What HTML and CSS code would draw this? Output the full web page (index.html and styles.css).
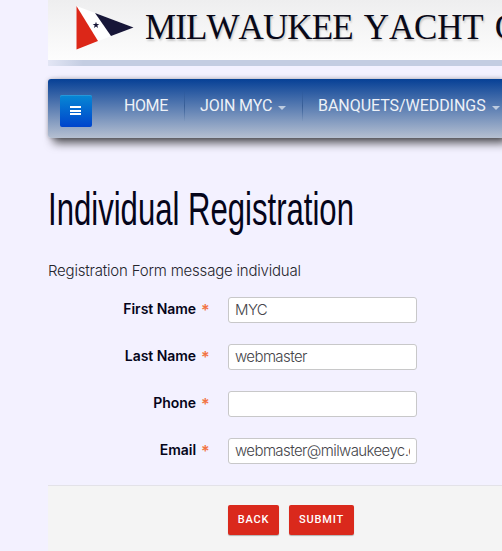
FILE: index.html
```html
<!DOCTYPE html>
<html lang="en">
<head>
<meta charset="utf-8">
<title>Individual Registration</title>
<link rel="stylesheet" href="styles.css">
</head>
<body>
<div class="page">
  <header class="brand">
    <svg class="burgee" width="58" height="46" viewBox="0 0 58 46" aria-hidden="true">
      <path d="M.5 1L57.5 22.5L.5 44.5Z" fill="#fff"/>
      <path d="M.5 1L22 36L.5 44.5Z" fill="#dc2718"/>
      <path d="M19 8L57.5 22.5L35 31Z" fill="#171638"/>
      <path d="M20 16.8l.8 2.2h2.5l-2 1.5.8 2.4-2.1-1.4-2.1 1.4.8-2.4-2-1.5h2.5z" fill="#171638"/>
    </svg>
    <span class="brand-name"><span class="city">MILWAUKEE</span> YACHT C</span>
  </header>
  <nav class="nav">
    <button class="menu-button" aria-label="Menu"><i></i><i></i><i></i></button>
    <a class="item home"><span>HOME</span></a>
    <a class="item join"><span>JOIN MYC</span><b class="caret"></b></a>
    <a class="item banquets"><span>BANQUETS/WEDDINGS</span><b class="caret"></b></a>
  </nav>
  <main>
    <h1><span>Individual Registration</span></h1>
    <p class="intro">Registration Form message individual</p>
    <form>
      <div class="row"><label for="first"><span>First Name</span><em>*</em></label><input id="first" value="MYC"></div>
      <div class="row"><label for="last"><span>Last Name</span><em>*</em></label><input id="last" value="webmaster"></div>
      <div class="row"><label for="phone"><span>Phone</span><em>*</em></label><input id="phone"></div>
      <div class="row"><label for="email"><span>Email</span><em>*</em></label><input id="email" value="webmaster@milwaukeeyc.com"></div>
      <div class="actions"><button type="button" class="back">BACK</button><button type="button" class="submit">SUBMIT</button></div>
    </form>
  </main>
</div>
</body>
</html>
```
FILE: styles.css
```css
* { box-sizing: border-box; }
body { margin: 0; background: #f3f1ff; color: #05051a; font: 300 15px/20px Inter, sans-serif; overflow: hidden; }
.page { margin-left: 48px; height: 551px; }
.brand { height: 66px; display: flex; align-items: flex-start; padding: 5px 0 0 28px; background: linear-gradient(#eeeeef, #fdfdfd 60px, transparent 60px), linear-gradient(90deg, #e3e6f5, #c4cde2 35px); overflow: hidden; }
.burgee { flex: none; }
.brand-name { flex: none; margin: 3px 0 0 11px; font: 35px/40px "Liberation Serif", serif; font-kerning: none; white-space: nowrap; color: #080818; text-shadow: 1px 2px 2px #0003; letter-spacing: -.15px; word-spacing: 2.5px; }
.city { letter-spacing: -.9px; }
.nav { height: 59px; margin-top: 13px; display: flex; border-radius: 3px 0 0 3px; background: linear-gradient(#064096, #b6c0d1); box-shadow: 5px 5px 10px #000a, 0 0 4px #0003; padding-left: 12px; }
.menu-button { flex: none; width: 32px; height: 32px; margin-top: 16px; border: 0; border-radius: 2px; background: linear-gradient(#0788d4, #0044cc); padding: 11px 10px; display: flex; flex-direction: column; gap: 1.5px; box-shadow: inset 0 1px #2498db; }
.menu-button i { width: 11px; height: 2px; flex: none; background: #fff; }
.item { height: 30px; margin-top: 12px; display: flex; align-items: center; font: 400 16px/30px Roboto, sans-serif; color: #edf1f7; white-space: nowrap; flex: none; }
.home { margin-left: 32px; width: 60px; letter-spacing: -.4px; }
.join, .banquets { border-left: 1px solid; border-image: linear-gradient(transparent, #234b8599, transparent) 1; padding-left: 15px; letter-spacing: -.05px; }
.join { width: 118px; letter-spacing: -.1px; }
.caret { margin: 3px 0 0 6px; border: 4px solid transparent; border-top-color: #bdcce0; border-bottom: 0; }
h1 { margin: 42px 0 0; height: 60px; font: 400 46px/60px "Liberation Sans", sans-serif; white-space: nowrap; }
h1 span { display: inline-block; width: 454px; transform: translateY(-1px) scaleX(.676); transform-origin: left; }
.intro { margin: 21px 0 16px; color: #25252d; letter-spacing: -.2px; }
.row { height: 26px; margin-bottom: 21px; display: flex; }
label { width: 160px; margin-right: 20px; display: flex; justify-content: flex-end; font: 600 14px/24px Inter, sans-serif; letter-spacing: -.05px; }
em { width: 7px; margin-left: 5px; color: #f27445; font-size: 16px; line-height: 26px; font-style: normal; letter-spacing: 0; }
input { width: 189px; height: 26px; border: 1px solid #c8c8c9; border-radius: 3px; background: #fff; padding: 0 6px 2px; color: #45454a; font: 300 15px/22px Inter, sans-serif; letter-spacing: -.6px; outline: 0; }
.actions { height: 66px; border-top: 1px solid #e3e2e8; background: #f4f4f4; padding: 19px 0 0 180px; display: flex; align-items: flex-start; gap: 10px; }
.actions button { height: 30px; padding: 0; border: 0; border-radius: 2px; color: #fff; background: #da291c; font: 500 11px/28px Roboto, sans-serif; letter-spacing: .8px; box-shadow: 0 1px 1px #0004; }
.back { width: 51px; }
.submit { width: 65px; }
```
